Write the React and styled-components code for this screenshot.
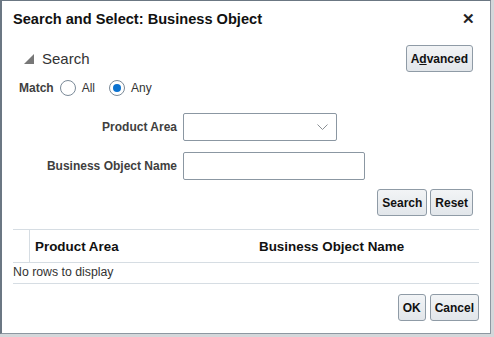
import React from "react";
import styled, { createGlobalStyle } from "styled-components";

const Global = createGlobalStyle`
  html, body { margin: 0; padding: 0; background: #d4d7da; }
  body { font-family: "Liberation Sans", Arial, sans-serif; }
  * { box-sizing: border-box; }
`;

const Dialog = styled.div`
  width: 491px;
  height: 334px;
  background: #fff;
  border: 1px solid #8d97a1;
  border-left: 2px solid #6b7783;
  border-top: 1px solid #6b7783;
  display: flex;
  flex-direction: column;
`;

const TitleBar = styled.div`
  display: flex;
  justify-content: space-between;
  align-items: center;
  height: 31px;
  padding: 4px 15px 0 11px;
`;

const Title = styled.div`
  font-size: 14.6px;
  font-weight: bold;
  color: #111;
`;

const Close = styled.span`
  font-size: 15px;
  font-weight: bold;
  color: #222;
`;

const Body = styled.div`
  padding: 0 10px 0 11px;
  display: flex;
  flex-direction: column;
`;

const SearchBar = styled.div`
  display: flex;
  justify-content: space-between;
  align-items: center;
  margin-top: 13px;
  padding-right: 7px;
`;

const Disclosure = styled.div`
  display: flex;
  align-items: center;
  gap: 8px;
  padding-left: 11px;
  font-size: 15px;
  color: #333;
`;

const Button = styled.button`
  height: 27px;
  padding: 0 ${(p) => p.$pad || 5}px;
  font-family: "Liberation Sans", Arial, sans-serif;
  font-size: 12px;
  font-weight: bold;
  color: #111;
  background: linear-gradient(#f2f4f6, #e2e6ea);
  border: 1px solid #8f9ba6;
  border-radius: 3px;
  cursor: pointer;
  u { text-decoration: underline; }
`;

const MatchRow = styled.div`
  display: flex;
  align-items: center;
  margin-top: 7px;
  padding-left: 6px;
  height: 17px;
  font-size: 12px;
  color: #333;
`;

const Label = styled.span`
  font-weight: bold;
  font-size: 12px;
  color: #3f3f3f;
`;

const RadioOpt = styled.label`
  display: flex;
  align-items: center;
  gap: 6px;
  margin-left: ${(p) => p.$ml}px;
`;

const Radio = styled.span`
  width: 16px;
  height: 16px;
  border-radius: 50%;
  border: 1px solid #7b8a98;
  background: #fff;
  display: flex;
  align-items: center;
  justify-content: center;
  &::after {
    content: "";
    width: 8px;
    height: 8px;
    border-radius: 50%;
    background: ${(p) => (p.$on ? "#0a72d0" : "transparent")};
  }
`;

const Form = styled.div`
  display: grid;
  grid-template-columns: 164px auto;
  column-gap: 6px;
  row-gap: 11px;
  margin-top: 17px;
  align-items: center;
`;

const FieldLabel = styled(Label)`
  text-align: right;
`;

const Box = styled.div`
  width: ${(p) => p.$w}px;
  height: 28px;
  border: 1px solid #8b97a2;
  border-radius: 2px;
  background: #fff;
  display: flex;
  align-items: center;
  justify-content: flex-end;
  padding-right: 8px;
`;

const ActionRow = styled.div`
  display: flex;
  justify-content: flex-end;
  gap: 3px;
  margin-top: 9px;
  padding-right: 7px;
`;

const Table = styled.div`
  margin-top: 13px;
  width: 466px;
  border-top: 1px solid #d6dde3;
`;

const HeadRow = styled.div`
  display: flex;
  height: 33px;
  border-bottom: 1px solid #d6dde3;
`;

const Gutter = styled.div`
  width: 17px;
  border-right: 1px solid #d6dde3;
`;

const HeadCell = styled.div`
  width: ${(p) => p.$w}px;
  padding-left: ${(p) => p.$pl}px;
  display: flex;
  align-items: center;
  font-size: 13.4px;
  font-weight: bold;
  color: #111;
`;

const EmptyRow = styled.div`
  height: 21px;
  border-bottom: 1px solid #d6dde3;
  font-size: 12.3px;
  color: #333;
  padding-top: 2px;
`;

const Footer = styled.div`
  display: flex;
  justify-content: flex-end;
  gap: 4px;
  margin-top: 10px;
  padding-right: 1px;
`;

export default function App() {
  return (
    <>
      <Global />
      <Dialog>
        <TitleBar>
          <Title>Search and Select: Business Object</Title>
          <Close>✕</Close>
        </TitleBar>
        <Body>
          <SearchBar>
            <Disclosure>
              <svg width="10" height="10" viewBox="0 0 10 10">
                <polygon points="10,0 10,10 0,10" fill="#777" />
              </svg>
              Search
            </Disclosure>
            <Button $pad={4}>
              A<u>d</u>vanced
            </Button>
          </SearchBar>
          <MatchRow>
            <Label>Match</Label>
            <RadioOpt $ml={6}>
              <Radio />
              All
            </RadioOpt>
            <RadioOpt $ml={14}>
              <Radio $on />
              Any
            </RadioOpt>
          </MatchRow>
          <Form>
            <FieldLabel>Product Area</FieldLabel>
            <Box $w={154}>
              <svg width="11" height="7" viewBox="0 0 11 7">
                <polyline points="0.5,0.5 5.5,5.5 10.5,0.5" fill="none" stroke="#8a8f94" strokeWidth="1" />
              </svg>
            </Box>
            <FieldLabel>Business Object Name</FieldLabel>
            <Box $w={182} />
          </Form>
          <ActionRow>
            <Button $pad={4}>Search</Button>
            <Button $pad={4}>Reset</Button>
          </ActionRow>
          <Table>
            <HeadRow>
              <Gutter />
              <HeadCell $w={224} $pl={5}>Product Area</HeadCell>
              <HeadCell $w={200} $pl={5}>Business Object Name</HeadCell>
            </HeadRow>
            <EmptyRow>No rows to display</EmptyRow>
          </Table>
          <Footer>
            <Button $pad={4}>OK</Button>
            <Button $pad={4}>Cancel</Button>
          </Footer>
        </Body>
      </Dialog>
    </>
  );
}
